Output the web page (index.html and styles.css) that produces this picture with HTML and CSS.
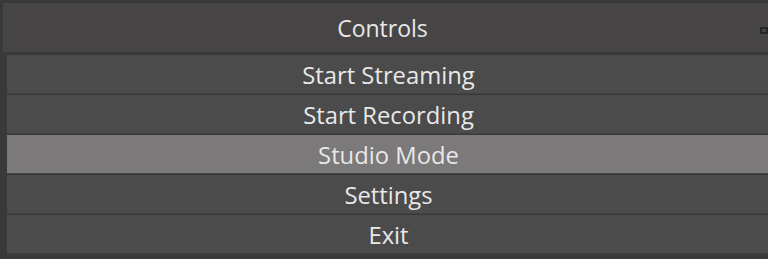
FILE: index.html
```html
<!DOCTYPE html>
<html>
<head>
<meta charset="utf-8">
<link rel="stylesheet" href="styles.css">
</head>
<body>
<div class="dock">
  <div class="title">
    <span class="title-text">Controls</span>
    <svg class="float-icon" width="8" height="8" viewBox="0 0 8 8"><rect x="1" y="2" width="6" height="5" fill="none" stroke="#1e1e1e" stroke-width="1.5"/></svg>
  </div>
  <div class="buttons">
    <div class="btn">Start Streaming</div>
    <div class="btn">Start Recording</div>
    <div class="btn active">Studio Mode</div>
    <div class="btn">Settings</div>
    <div class="btn">Exit</div>
  </div>
</div>
</body>
</html>
```
FILE: styles.css
```css
html, body {
  margin: 0;
  padding: 0;
  background: #3a393a;
  width: 768px;
  height: 259px;
  overflow: hidden;
}
.dock {
  padding: 3px 0 0 3px;
  font-family: "Open Sans", "Noto Sans", sans-serif;
  color: #e8e8e8;
}
.title {
  position: relative;
  height: 49px;
  background: #474546;
  display: flex;
  align-items: center;
  justify-content: center;
  font-size: 23px;
  line-height: 1;
}
.title-text {
  padding-top: 2px;
  margin-right: 6px;
}
.float-icon {
  position: absolute;
  right: 0;
  top: 23px;
}
.buttons {
  margin-top: 3px;
  padding-left: 4px;
  display: flex;
  flex-direction: column;
  gap: 1px;
}
.btn {
  height: 39px;
  background: #4b4b4b;
  border-bottom: 1px solid #434343;
  box-sizing: border-box;
  display: flex;
  align-items: center;
  justify-content: center;
  font-size: 23.8px;
  line-height: 1;
  padding-left: 2px;
  padding-top: 4px;
}
.btn.active {
  background: #7b797a;
}
```
